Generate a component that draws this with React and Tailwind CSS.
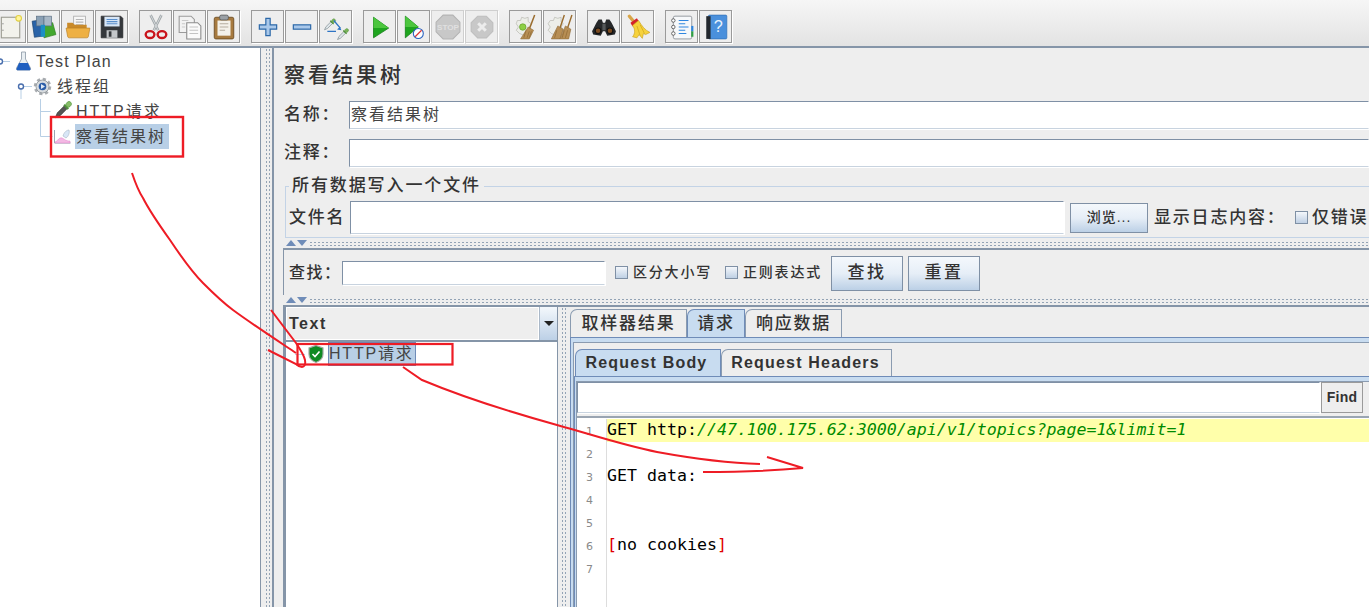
import React from "react";

const Svg = ({ children, s = 26 }) => (
  <svg width={s} height={s} viewBox="0 0 24 24" className="shrink-0 block">{children}</svg>
);

const Pipette = ({ x = 0, y = 0, r = 0, sc = 1 }) => (
  <g transform={`translate(${x} ${y}) rotate(${r}) scale(${sc})`}>
    <path d="M-1.5 -4h3v9l-1.500 4l-1.500-4z" fill="#dfe6ea" stroke="#6b7c80" strokeWidth=".7" />
    <rect x="-3" y="-5.200" width="6" height="1.600" fill="#4f8f3a" />
    <rect x="-2.200" y="-10" width="4.400" height="5" rx="2" fill="#79b35a" stroke="#4b8a35" strokeWidth=".5" />
  </g>
);

const icons = {
  newDoc: (
    <Svg>
      <rect x="4" y="3" width="17" height="19" fill="#f2f2ec" stroke="#9a9a90" />
      <circle cx="5.500" cy="9" r=".7" fill="#999" /><circle cx="5.500" cy="15" r=".7" fill="#999" />
      <circle cx="20" cy="4" r="2.600" fill="#fff59a" stroke="#e0cf45" />
    </Svg>
  ),
  templates: (
    <Svg>
      <rect x="2" y="6" width="8" height="15" fill="#2a63a8" stroke="#17406f" strokeWidth=".6" transform="rotate(-8 6 13)" />
      <path d="M10 10l10-2 3 11-11 3z" fill="#43a82f" stroke="#2c7a1e" strokeWidth=".6" />
      <rect x="5" y="2" width="7" height="9" fill="#8aa0b5" stroke="#5a6d80" strokeWidth=".6" />
      <rect x="12" y="2" width="7" height="9" fill="#a9b8c6" stroke="#5a6d80" strokeWidth=".6" />
      <rect x="9" y="10" width="4" height="11" fill="#1c8fc4" />
    </Svg>
  ),
  open: (
    <Svg>
      <rect x="8" y="2" width="11" height="14" fill="#f6f6f6" stroke="#a5a5a5" strokeWidth=".7" />
      <path d="M10 5h7M10 7.500h7M10 10h7" stroke="#b5b5b5" />
      <path d="M2 8h5l2 2h11v4H2z" fill="#c98a2a" />
      <path d="M1 13h22l-1.500 8a1.500 1.500 0 0 1-1.500 1H4a1.500 1.500 0 0 1-1.500-1z" fill="#eeb043" stroke="#b87f24" strokeWidth=".6" />
    </Svg>
  ),
  save: (
    <Svg>
      <path d="M2 2h18l2 2v18H2z" fill="#35383c" stroke="#1d1f22" strokeWidth=".6" />
      <rect x="5" y="2.500" width="14" height="9" fill="#d8e6f6" />
      <path d="M7 5h10M7 7h10M7 9h10" stroke="#5a8fcc" />
      <rect x="7" y="15" width="10" height="7" fill="#c4c7ca" />
      <rect x="9" y="16" width="2.500" height="5" fill="#33363a" />
    </Svg>
  ),
  cut: (
    <Svg>
      <path d="M7 1l7 14M17 1l-7 14" stroke="#9da3a6" strokeWidth="2.400" />
      <path d="M7 1l7 14M17 1l-7 14" stroke="#dfe3e5" strokeWidth=".8" />
      <ellipse cx="6.500" cy="19" rx="4" ry="3.200" fill="none" stroke="#c9141b" strokeWidth="2.200" />
      <ellipse cx="17.500" cy="19" rx="4" ry="3.200" fill="none" stroke="#c9141b" strokeWidth="2.200" />
    </Svg>
  ),
  copy: (
    <Svg>
      <path d="M2 2h11l3 3v12H2z" fill="#f2f2f2" stroke="#9a9a9a" />
      <path d="M9 8h10l3 3v12H9z" fill="#fafafa" stroke="#8c8c8c" />
      <path d="M11.500 12h8M11.500 15h8M11.500 18h8" stroke="#c3c3c3" />
      <path d="M4.500 6h6M4.500 9h3M4.500 12h3" stroke="#c9c9c9" />
    </Svg>
  ),
  paste: (
    <Svg>
      <rect x="3" y="3" width="18" height="20" rx="1.500" fill="#a77a3f" stroke="#6b4a20" strokeWidth=".8" />
      <rect x="6" y="6" width="12" height="14" fill="#f4f1ea" />
      <path d="M8 9h8M8 12h8M8 15h5" stroke="#b5ada0" />
      <rect x="8" y="1" width="8" height="4.500" rx="1.500" fill="#9aa0a6" stroke="#555" strokeWidth=".7" />
    </Svg>
  ),
  plus: (
    <Svg>
      <path d="M10 4h4v6h6v4h-6v6h-4v-6H4v-4h6z" fill="#a9c8ea" stroke="#2c68a8" strokeWidth="1.100" />
    </Svg>
  ),
  minus: (
    <Svg>
      <rect x="4" y="10" width="16" height="4" fill="#a9c8ea" stroke="#2c68a8" strokeWidth="1.100" />
    </Svg>
  ),
  toggle: (
    <Svg>
      <Pipette x={6} y={10} r={45} sc={.72} />
      <Pipette x={18} y={19} r={45} sc={.72} />
      <path d="M4 16h8M10 6l6 7" stroke="#2e74c4" strokeWidth="1.200" fill="none" />
      <path d="M17 15l-4-.8 2.600-2.400z" fill="#2e74c4" />
    </Svg>
  ),
  play: (
    <Svg>
      <path d="M6 3l14 10L6 22z" fill="#1ea51e" stroke="#0f7a13" strokeWidth=".7" />
      <path d="M6 3l14 10H6z" fill="#4cc63e" />
    </Svg>
  ),
  playNo: (
    <Svg>
      <path d="M4 2l12 10L4 22z" fill="#1ea51e" stroke="#0f7a13" strokeWidth=".7" />
      <path d="M4 2l12 10H4z" fill="#4cc63e" />
      <circle cx="16" cy="18" r="4.600" fill="#fff" stroke="#2b62c0" strokeWidth="1" />
      <path d="M13 21l6-6" stroke="#d33" strokeWidth="1.100" />
    </Svg>
  ),
  stop: (
    <Svg>
      <path d="M7.500 1h9L23 7.500v9L16.500 23h-9L1 16.500v-9z" fill="#c8c8c8" stroke="#b4b4b4" />
      <text x="12" y="15" textAnchor="middle" fontSize="7.500" fontWeight="700" fill="#e0e0e0" fontFamily="Liberation Sans">STOP</text>
    </Svg>
  ),
  shut: (
    <Svg>
      <path d="M8 2h8l6 6v8l-6 6H8l-6-6V8z" fill="#c8c8c8" stroke="#bdbdbd" />
      <path d="M8.500 8.500l7 7M15.500 8.500l-7 7" stroke="#ececec" strokeWidth="2.800" />
    </Svg>
  ),
  clear: (
    <Svg>
      <path d="M4 6h3l1-3 3 1 3-1v4l3 2-2 3 2 3-4 2-2 3-5-2-3-3 2-3-2-3z" fill="#eceee8" stroke="#bcbcb5" strokeWidth=".7" />
      <circle cx="9" cy="12" r="3" fill="#8dcf45" stroke="#5e9e24" strokeWidth=".6" />
      <path d="M20 1l-5 13" stroke="#9a6c2e" strokeWidth="1.400" />
      <path d="M14 12l5 3-4 8H7z" fill="#b78e54" stroke="#8a6530" strokeWidth=".5" />
      <path d="M12 15l-2 7M15 16l-2 6M17 16l-2 6" stroke="#8a6530" strokeWidth=".6" />
    </Svg>
  ),
  clearAll: (
    <Svg>
      <path d="M3 6h3l1-3 3 1 3-1v4l2 2-2 3 2 3-4 2-2 3-5-2-3-3 2-3-2-3z" fill="#eceee8" stroke="#bcbcb5" strokeWidth=".7" />
      <path d="M16 1l-4 12M23 1l-4 12" stroke="#9a6c2e" strokeWidth="1.300" />
      <path d="M10 11l5 3-3 9H4z" fill="#b78e54" stroke="#8a6530" strokeWidth=".5" />
      <path d="M17 11l5 3-2 9h-8z" fill="#b78e54" stroke="#8a6530" strokeWidth=".5" />
      <path d="M9 15l-2 7M16 15l-2 7M19 15l-2 7" stroke="#8a6530" strokeWidth=".6" />
    </Svg>
  ),
  binoc: (
    <Svg>
      <path d="M5 8l2-3h3l1 3h2l1-3h3l2 3 4 8-1 3-7 1-2-4h-2l-2 4-7-1-1-3z" fill="#26282a" />
      <rect x="10.500" y="9" width="3" height="6" fill="#55585a" />
      <circle cx="6.500" cy="15.500" r="2.600" fill="#7a4a20" stroke="#111" />
      <circle cx="17.500" cy="15.500" r="2.600" fill="#7a4a20" stroke="#111" />
    </Svg>
  ),
  broom: (
    <Svg>
      <path d="M4 2l5 6" stroke="#d8a548" strokeWidth="3" strokeLinecap="round" />
      <path d="M5 8l6-4 1.500 2.500-5.500 5z" fill="#d4212a" />
      <path d="M7 10.500l5.500-4.500c3 5 6 9 10.500 11l-4 2-2-1-1 4.500-3-3.500-2 3-4-1c2.500-3 2.500-7 0-10.500z" fill="#f6d23c" stroke="#c9a11f" strokeWidth=".6" />
      <path d="M11 11l3 9M14 10l4 8" stroke="#d1a91f" strokeWidth=".7" />
    </Svg>
  ),
  list: (
    <Svg>
      <rect x="4" y="2" width="17" height="21" rx="1.500" fill="#f6f8fa" stroke="#8a8f94" strokeWidth=".8" />
      <path d="M9 6h9M9 9h6M9 12h9M9 15h6M9 18h7" stroke="#2f86df" strokeWidth="1.100" />
      <circle cx="4" cy="6" r="1.600" fill="#fff" stroke="#444" strokeWidth=".7" />
      <circle cx="4" cy="12" r="1.600" fill="#fff" stroke="#444" strokeWidth=".7" />
      <circle cx="4" cy="18" r="1.600" fill="#fff" stroke="#444" strokeWidth=".7" />
      <rect x="20.500" y="11" width="2" height="5" fill="#2f86df" /><rect x="20.500" y="16" width="2" height="5" fill="#2ea043" />
    </Svg>
  ),
  help: (
    <Svg>
      <rect x="5" y="1" width="17" height="22" rx="1" fill="#4a90dc" stroke="#2d6cb3" strokeWidth=".6" />
      <rect x="3" y="2" width="4" height="21" fill="#23282e" />
      <text x="14" y="17" textAnchor="middle" fontSize="15" fontFamily="Liberation Sans" fill="#e8f2fc">?</text>
    </Svg>
  ),
};

const groups = [
  ["newDoc", "templates", "open", "save"],
  ["cut", "copy", "paste"],
  ["plus", "minus", "toggle"],
  ["play", "playNo", "stop", "shut"],
  ["clear", "clearAll"],
  ["binoc", "broom"],
  ["list", "help"],
];
const disabled = { stop: 1, shut: 1 };

const ToolBtn = ({ name }) => (
  <div
    className={
      "w-[33px] h-[33px] flex items-center justify-center border bg-[#eeeeee] shadow-[1px_1px_0_#ffffff] " +
      (disabled[name] ? "border-[#cfcfcf]" : "border-[#9a9a9a]")
    }
  >
    {icons[name]}
  </div>
);

const Check = ({ cls = "" }) => (
  <span className={"w-[13px] h-[13px] border border-[#7f90a5] bg-gradient-to-b from-[#f4f7fb] to-[#bfd0e4] shrink-0 " + cls} />
);

const Btn = ({ children, w, h, cls = "" }) => (
  <div
    className={
      "flex items-center justify-center shrink-0 border border-[#7f90a5] bg-gradient-to-b from-[#f4f8fc] via-[#e6eef7] to-[#bcd0e6] text-[#333] " + cls
    }
    style={{ width: w, height: h }}
  >
    {children}
  </div>
);

const Input = ({ cls = "", children }) => (
  <div className={"bg-white border border-[#7f90a5] border-r-white border-b-[#c8d3df] shadow-[1px_1px_0_#ffffff] " + cls}>{children}</div>
);

const Tri = ({ up, cls = "" }) => (
  <svg width="10" height="6" viewBox="0 0 10 6" className={"block " + cls}>
    <path d={up ? "M0 6L5 0l5 6z" : "M0 0h10L5 6z"} fill="#6f8cb8" />
  </svg>
);

const HSplit = () => (
  <div className="h-[10px] flex items-center pl-[12px] shrink-0 relative">
    <Tri up /><Tri cls="ml-[1px]" />
    <div className="flex-1 h-[5px] ml-[2px] bg-[radial-gradient(#93a3b5_0.7px,transparent_0.8px)] bg-[length:4px_3px]" />
  </div>
);

const Tab = ({ children, active, bold, w, h, cls = "" }) => (
  <div
    className={
      "flex items-center justify-center shrink-0 rounded-tl-[7px] border border-b-0 " +
      (active ? "bg-[#c8dcf0] border-[#6f8cb8] pb-[2px] " : "bg-[#eeeeee] border-[#8a9bb0] ") +
      (bold ? "font-bold " : "") +
      cls
    }
    style={{ width: w, height: h }}
  >
    {children}
  </div>
);

const Num = ({ n }) => (
  <div className="h-[23px] flex items-center">
    <div className="w-[29px] pr-[13px] text-right text-[11px] text-[#8a8a8a] font-['DejaVu_Sans',sans-serif] pt-[3px]">{n}</div>
  </div>
);

const lines = [
  <>GET http:<span className="italic text-[#008a00]">//47.100.175.62:3000/api/v1/topics?page=1&amp;limit=1</span></>,
  "",
  "GET data:",
  "",
  "",
  <><span className="text-[#e00000]">[</span>no cookies<span className="text-[#e00000]">]</span></>,
  "",
];

const Annotations = () => (
  <svg className="absolute left-0 top-0 pointer-events-none" width="1369" height="607" viewBox="0 0 1369 607" fill="none" stroke="#ee1c25" strokeWidth="2">
    <rect x="51" y="117" width="132" height="39.500" strokeWidth="2.400" />
    <rect x="297.500" y="344" width="155" height="20.500" strokeWidth="2.200" />
    <path d="M132 173C136 185 139 192 143 198C150 212 160 226 170 240C180 255 192 272 203 283C213 293 222 302 233 310C252 324 275 339 296 353" />
    <path d="M271 310L296 343C300 349 304 355 305 360C306 365 304 367 302 367C299 367 297 365 296 364L268 350" />
    <path d="M403 367L422 380C465 398 510 412 557 425C590 434 622 445 657 452C690 458 725 463 760 464" />
    <path d="M767 457L803 468C770 471 737 472 703 472" />
  </svg>
);

export default function App() {
  return (
    <div className="relative w-[1369px] h-[607px] overflow-hidden bg-[#eeeeee] text-[#333333] font-['Liberation_Sans','Noto_Sans_CJK_SC',sans-serif]">
      <div className="h-[46px] pt-[10px] flex bg-gradient-to-b from-[#f6f6f6] to-[#e3e3e3] gap-[11px] -ml-[7px]">
        {groups.map((g, i) => (
          <div key={i} className="flex gap-[1px]">
            {g.map((n) => <ToolBtn key={n} name={n} />)}
          </div>
        ))}
      </div>
      <div className="h-[2px] bg-[#8595a8]" />

      <div className="flex h-[559px]">
        {/* tree */}
        <div className="w-[260px] shrink-0 bg-white pt-[1px] relative text-[16px] text-[#444] tracking-[2px]">
          <div className="h-[25px] flex items-center">
            <svg width="36" height="25" viewBox="0 0 36 25" className="shrink-0">
              <path d="M2 12.500h8" stroke="#b8cfe5" />
              <circle cx="0" cy="12.500" r="2.500" fill="#fff" stroke="#4a6fae" strokeWidth="1.400" />
              <path d="M21.500 3v7l-5 9a1.500 1.500 0 0 0 1 2h12a1.500 1.500 0 0 0 1-2l-5-9V3z" fill="#e8eef2" stroke="#8a98a5" strokeWidth=".8" />
              <path d="M19 14h9l2.500 6a1 1 0 0 1-1 1.200h-12a1 1 0 0 1-1-1.200z" fill="#1f5fc0" />
            </svg>
            <span className="tracking-[1.100px]">Test Plan</span>
          </div>
          <div className="h-[25px] flex items-center">
            <svg width="57" height="25" viewBox="0 0 57 25" className="shrink-0">
              <path d="M21 15v10" stroke="#b8cfe5" />
              <path d="M23 12.500h9" stroke="#b8cfe5" />
              <circle cx="21" cy="12.500" r="2.500" fill="#fff" stroke="#4a6fae" strokeWidth="1.400" />
              <circle cx="42.500" cy="12.500" r="7" fill="none" stroke="#a9adb1" strokeWidth="3.500" strokeDasharray="3 2.500" />
              <circle cx="42.500" cy="12.500" r="6.500" fill="#d8dcdf" stroke="#8a9096" strokeWidth=".8" />
              <circle cx="42.500" cy="12.500" r="3.800" fill="#2c5ea8" />
              <path d="M41 10l4 2.500-4 2.500z" fill="#dfe9f5" />
            </svg>
            <span>线程组</span>
          </div>
          <div className="h-[25px] flex items-center">
            <svg width="76" height="25" viewBox="0 0 76 25" className="shrink-0">
              <path d="M40.500 0v25M40.500 12.500h10" stroke="#b8cfe5" fill="none" />
              <g transform="translate(63 11) rotate(45)">
                <path d="M-2 -4h4v10l-2 5l-2-5z" fill="#555" stroke="#333" strokeWidth=".6" />
                <rect x="-3" y="-5.500" width="6" height="2" fill="#4f8f3a" />
                <rect x="-2.500" y="-11" width="5" height="6" rx="2.500" fill="#86bd67" stroke="#4b8a35" strokeWidth=".5" />
              </g>
            </svg>
            <span>HTTP请求</span>
          </div>
          <div className="h-[25px] flex items-center">
            <svg width="75" height="25" viewBox="0 0 75 25" className="shrink-0">
              <path d="M40.500 0v12.500h12" stroke="#b8cfe5" fill="none" />
              <path d="M54.500 6v13h16" stroke="#9aa5b0" fill="none" />
              <path d="M55 18c3-1 4-5 7-4s3 3 8 3v2H55z" fill="#f4b8e4" stroke="#e080c8" strokeWidth=".5" />
              <path d="M63 12c1-4 4-6 6-6 1 3-1 7-3 8z" fill="#d8e6f6" stroke="#9ab" strokeWidth=".5" />
            </svg>
            <span className="h-[25px] w-[94px] flex items-center pl-[1px] bg-[#b8cfe6]">察看结果树</span>
          </div>
        </div>

        {/* vertical splitter */}
        <div className="w-[12px] shrink-0 border-l border-[#8595a8] pl-[4px]">
          <div className="w-[5px] h-full bg-[radial-gradient(#93a3b5_0.7px,transparent_0.8px)] bg-[length:3px_4px]" />
        </div>

        {/* right */}
        <div className="flex-1 min-w-0 border-l-2 border-[#8595a8] flex flex-col overflow-hidden text-[16px] tracking-[2px] font-medium">
          <div className="h-[53px] flex items-center pl-[10px] text-[21px] tracking-[3px] shrink-0">察看结果树</div>
          <div className="h-[28px] flex items-center pl-[10px] shrink-0">
            <span className="w-[65px] shrink-0 text-[17px] tracking-[1.800px]">名称：</span>
            <Input cls="flex-1 h-[28px] flex items-center pl-[1px] text-[#444] font-normal">察看结果树</Input>
          </div>
          <div className="h-[28px] mt-[10px] flex items-center pl-[10px] shrink-0">
            <span className="w-[65px] shrink-0 text-[17px] tracking-[1.800px]">注释：</span>
            <Input cls="flex-1 h-[28px]" />
          </div>
          <fieldset className="mt-[9px] ml-[11px] h-[62px] border-y border-l border-[#c3d3e6] pl-[3px] shrink-0 min-w-0">
            <legend className="px-[3px] text-[17px] leading-[20px] tracking-[1.900px]">所有数据写入一个文件</legend>
            <div className="flex items-center h-[33px] mt-[5px]">
              <span className="w-[61px] shrink-0 text-[17px] tracking-[1.800px]">文件名</span>
              <Input cls="w-[714px] h-[33px] shrink-0" />
              <Btn w={78} h={30} cls="ml-[6px] text-[14px] tracking-[1px]">浏览...</Btn>
              <span className="ml-[6px] w-[141px] shrink-0 whitespace-nowrap text-[17px] tracking-[1.800px]">显示日志内容：</span>
              <Check />
              <span className="ml-[4px] whitespace-nowrap text-[17px] tracking-[1.800px]">仅错误</span>
            </div>
          </fieldset>
          <HSplit />
          <div className="h-[2px] bg-[#8595a8] ml-[9px] shrink-0" />
          <div className="h-[45px] ml-[9px] border-l border-[#8595a8] flex items-center pl-[5px] shrink-0 text-[14px] tracking-[1.800px]">
            <span className="w-[53px] shrink-0 text-[16px] tracking-[1.500px] whitespace-nowrap">查找：</span>
            <Input cls="w-[263px] h-[24px] shrink-0" />
            <Check cls="ml-[10px]" />
            <span className="ml-[5px] w-[92px] shrink-0">区分大小写</span>
            <Check />
            <span className="ml-[5px] w-[88px] shrink-0">正则表达式</span>
            <Btn w={72} h={35} cls="text-[17px] tracking-[2.500px] mt-[1px]">查找</Btn>
            <Btn w={72} h={35} cls="ml-[5px] text-[17px] tracking-[2.500px] mt-[1px]">重置</Btn>
          </div>
          <HSplit />
          <div className="h-[2px] bg-[#8595a8] ml-[9px] shrink-0" />

          <div className="flex-1 flex ml-[9px] min-h-0">
            {/* result tree */}
            <div className="w-[275px] shrink-0 border-l-[3px] border-[#8595a8] border-r border-r-[#8595a8] flex flex-col">
              <div className="h-[35px] flex border-b-2 border-[#8595a8] shrink-0">
                <div className="flex-1 flex items-center pl-[2px] font-bold tracking-[1.500px] bg-[#eeeeee] border border-white">Text</div>
                <div className="w-[18px] flex items-center justify-center bg-gradient-to-b from-[#f4f8fc] to-[#bcd0e6] border-l border-[#aab8c8]">
                  <svg width="10" height="5" viewBox="0 0 10 5"><path d="M0 0h10L5 5z" fill="#222" /></svg>
                </div>
              </div>
              <div className="flex-1 bg-white text-[#444] tracking-[1.800px] font-normal">
                <div className="h-[24px] flex items-center">
                  <svg width="42" height="24" viewBox="0 0 42 24" className="shrink-0">
                    <path d="M9 12.500h10" stroke="#b8cfe5" />
                    <path d="M30 3.500l7 2.500v6c0 4-3 7-7 8.500-4-1.500-7-4.500-7-8.500V6z" fill="#0e8a22" stroke="#a0a8a2" strokeWidth="1.200" />
                    <path d="M26.500 12l2.500 2.500 4.500-5" stroke="#fff" strokeWidth="1.600" fill="none" />
                  </svg>
                  <span className="h-[24px] w-[88px] flex items-center bg-[#b8cfe6] border border-[#6f8cb8] whitespace-nowrap">HTTP请求</span>
                </div>
              </div>
            </div>
            {/* splitter */}
            <div className="w-[10px] shrink-0 relative pl-[3px]">
              <div className="w-[5px] h-full bg-[radial-gradient(#93a3b5_0.7px,transparent_0.8px)] bg-[length:3px_4px]" />
            </div>
            {/* tabs */}
            <div className="flex-1 min-w-0 flex flex-col">
              <div className="h-[28px] mt-[2px] flex text-[17px] tracking-[1.800px] shrink-0 pl-[2px]">
                <Tab w={117} h={28}>取样器结果</Tab>
                <Tab active w={58} h={30}>请求</Tab>
                <Tab w={97} h={28}>响应数据</Tab>
              </div>
              <div className="flex-1 min-h-0 ml-[2px] border-t border-l border-[#6f8cb8] bg-[#c8dcf0] pt-[4px] pl-[2px]">
                <div className="h-full border-t border-l border-[#8a9bb0] bg-[#eeeeee] pt-[6px] flex flex-col">
                  <div className="h-[27px] flex font-bold tracking-[1.200px] shrink-0 pl-[1px]">
                    <Tab active bold w={146} h={29} cls="pr-[3px]">Request Body</Tab>
                    <Tab bold w={171} h={27} cls="pr-[2px]">Request Headers</Tab>
                  </div>
                  <div className="flex-1 min-h-0 border-t border-l border-[#6f8cb8] bg-[#c8dcf0] pt-[4px] pl-[1px]">
                    <div className="h-full border-t border-l border-[#8a9bb0] bg-[#eeeeee] flex flex-col">
                      <div className="h-[31px] flex shrink-0 mb-[3px]">
                        <Input cls="w-[743px] h-[31px] shrink-0" />
                        <div className="ml-[1px] w-[42px] h-[31px] flex items-center justify-center border border-[#9a9a9a] bg-[#eeeeee] text-[14px] font-bold tracking-[0.300px]">Find</div>
                      </div>
                      <div className="flex-1 min-h-0 border-t-2 border-[#9aa5b2] bg-white flex pt-[1px] font-['DejaVu_Sans_Mono',monospace] font-normal text-[16.600px] tracking-normal text-black">
                        <div className="w-[30px] shrink-0 border-r border-[#dddddd]">
                          {[1, 2, 3, 4, 5, 6, 7].map((n) => <Num key={n} n={n} />)}
                        </div>
                        <div className="flex-1 min-w-0">
                          {lines.map((l, i) => (
                            <div key={i} className={"h-[23px] leading-[21px] whitespace-pre " + (i === 0 ? "bg-[#ffffaa]" : "")}>{l}</div>
                          ))}
                        </div>
                      </div>
                    </div>
                  </div>
                </div>
              </div>
            </div>
          </div>
        </div>
      </div>
      <Annotations />
    </div>
  );
}
